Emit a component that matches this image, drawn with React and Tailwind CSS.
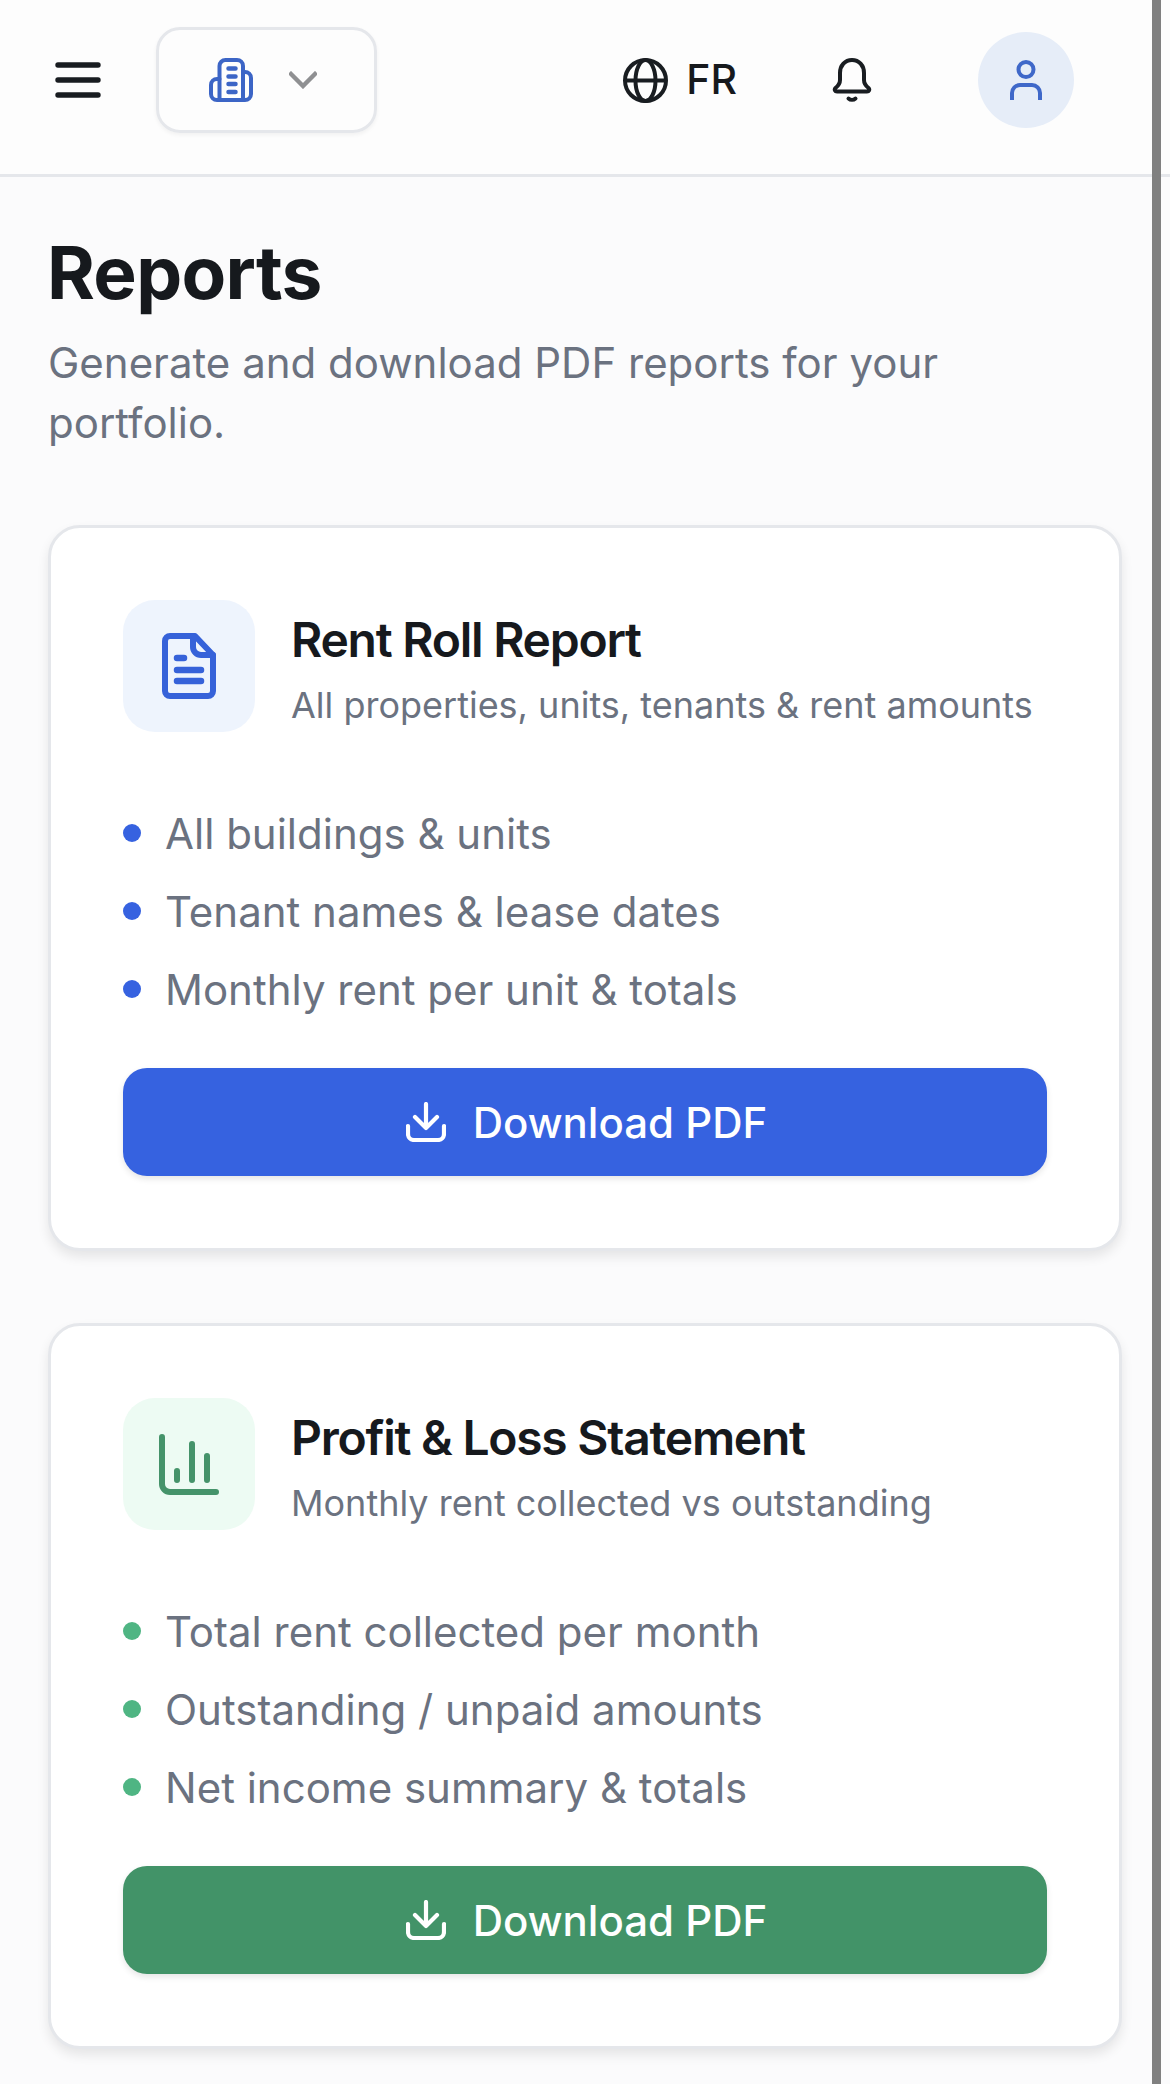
import React from "react";

function Building() {
  return (
    <svg width="44" height="44" viewBox="0 0 44 44" fill="none" stroke="#3c65c6" strokeWidth="4" strokeLinecap="round" strokeLinejoin="round">
      <path d="M10.5 41V8a6 6 0 0 1 6-6H28a6 6 0 0 1 6 6v33" />
      <path d="M10.5 21H8a6 6 0 0 0-6 6v9a6 6 0 0 0 6 6h28a6 6 0 0 0 6-6V20a6 6 0 0 0-6-6h-2" />
      <path d="M19.5 10.5h7M19.5 18.5h7M19.5 26h7M19.5 34h7" strokeWidth="4.5" />
    </svg>
  );
}
function Chevron() {
  return (
    <svg width="28" height="18" viewBox="0 0 28 18" fill="none" stroke="#8f9092" strokeWidth="4.4" strokeLinecap="square">
      <path d="M2 3l12 12L26 3" />
    </svg>
  );
}
function Burger() {
  return (
    <svg width="46" height="36" viewBox="0 0 46 36" fill="none" stroke="#181c20" strokeWidth="5.4" strokeLinecap="round">
      <path d="M3 3h40M3 18h40M3 33h40" />
    </svg>
  );
}
function Globe() {
  return (
    <svg width="45" height="45" viewBox="0 0 45 45" fill="none" stroke="#191d21" strokeWidth="4">
      <circle cx="22.5" cy="22.5" r="20.5" />
      <ellipse cx="22.5" cy="22.5" rx="10" ry="20.5" />
      <path d="M2 22.5h41" />
    </svg>
  );
}
function Bell() {
  return (
    <svg width="40" height="44" viewBox="0 0 40 44" fill="none" stroke="#191d21" strokeWidth="4" strokeLinecap="round" strokeLinejoin="round">
      <path d="M20 2c-7 0-12 5.5-12 13v7c0 4-2 6-4.5 8-1.500 1.500-.5 3.500 1.500 3.500h30c2 0 3-2 1.500-3.500-2.500-2-4.500-4-4.500-8v-7c0-7.500-5-13-12-13z" />
      <path d="M16.500 40.500c2 1.800 5 1.800 7 0" />
    </svg>
  );
}
function Person() {
  return (
    <svg width="32" height="40" viewBox="0 0 32 40" fill="none" stroke="#3f68c9" strokeWidth="4">
      <circle cx="16" cy="9.500" r="7.500" />
      <path d="M2 40v-7a8 8 0 0 1 8-8h12a8 8 0 0 1 8 8v7" />
    </svg>
  );
}
function FileIcon() {
  return (
    <svg width="54" height="66" viewBox="0 0 54 66" fill="none" stroke="#3662d9" strokeWidth="6" strokeLinecap="round" strokeLinejoin="round">
      <path d="M8 3h25l18 19v36a5 5 0 0 1-5 5H8a5 5 0 0 1-5-5V8a5 5 0 0 1 5-5z" />
      <path d="M31 3v11a8 8 0 0 0 8 8h12" />
      <path d="M15 25h7M15 37h24M15 48h24" strokeWidth="6.500" />
    </svg>
  );
}
function ChartIcon() {
  return (
    <svg width="60" height="61" viewBox="0 0 60 61" fill="none" stroke="#45936a" strokeWidth="6" strokeLinecap="round">
      <path d="M3 3v47a8 8 0 0 0 8 8h46" />
      <path d="M18 37v9M33 10v36M48 22v24" />
    </svg>
  );
}
function DownloadIcon() {
  return (
    <svg width="40" height="40" viewBox="0 0 40 40" fill="none" stroke="#ffffff" strokeWidth="4.200" strokeLinecap="round" strokeLinejoin="round">
      <path d="M20 2v24M9 15l11 11 11-11" />
      <path d="M2 24v8a6 6 0 0 0 6 6h24a6 6 0 0 0 6-6v-8" />
    </svg>
  );
}

function Card({ icon, iconBg, title, sub, items, dot, btn, className }) {
  return (
    <section className={`w-[1074px] rounded-[32px] border-[3px] border-[#e5e7eb] bg-white p-[72px] shadow-[0_6px_12px_rgba(0,0,0,0.09)] ${className}`}>
      <div className="flex items-center gap-[36px]">
        <div className={`flex h-[132px] w-[132px] shrink-0 items-center justify-center rounded-[32px] ${iconBg}`}>{icon}</div>
        <div className="flex flex-col pt-[7px]">
          <h2 className="text-[48px] leading-[60px] font-semibold tracking-[-1.25px] text-[#16191d]">{title}</h2>
          <p className="mt-[10px] text-[36px] leading-[50px] text-[#6b7280]">{sub}</p>
        </div>
      </div>
      <ul className="mt-[62px] flex flex-col">
        {items.map((t) => (
          <li key={t} className="flex h-[78px] items-center gap-[24px] text-[42px] text-[#6b7280]">
            <span className={`h-[18px] w-[18px] shrink-0 rounded-full ${dot}`} />
            {t}
          </li>
        ))}
      </ul>
      <button className={`mt-[40px] flex h-[108px] w-full items-center justify-center gap-[27px] rounded-[24px] pl-[3px] text-[42px] font-medium text-white shadow-[0_3px_6px_rgba(0,0,0,0.1)] ${btn}`}>
        <DownloadIcon />
        Download PDF
      </button>
    </section>
  );
}

export default function App() {
  return (
    <div className="relative h-[2084px] w-[1170px] overflow-hidden bg-[#fbfbfc] [font-family:Inter,sans-serif]">
      <header className="flex h-[177px] items-center border-b-[3px] border-[#e5e7eb] bg-[#fdfdfd] pb-[14px] pl-[55px] pr-[96px]">
        <Burger />
        <div className="ml-[55px] flex h-[106px] w-[221px] items-center justify-center gap-[36px] rounded-[24px] border-[3px] border-[#e5e7eb] pr-[7px] shadow-[0_2px_4px_rgba(0,0,0,0.05)]">
          <Building />
          <Chevron />
        </div>
        <div className="ml-auto flex items-center">
          <Globe />
          <span className="ml-[18px] text-[41px] font-medium text-[#16191d]">FR</span>
          <span className="ml-[95px] flex"><Bell /></span>
          <div className="ml-[106px] flex h-[96px] w-[96px] items-center justify-center rounded-full bg-[#e6edf8]"><Person /></div>
        </div>
      </header>
      <main className="pl-[48px] pt-[54px]">
        <h1 className="-ml-px text-[73px] leading-[84px] font-bold tracking-[-0.7px] text-[#16191d]">Reports</h1>
        <p className="mt-[18px] w-[1000px] text-[42px] leading-[60px] text-[#6b7280]">Generate and download PDF reports for your portfolio.</p>
        <Card
          className="mt-[72px]"
          icon={<FileIcon />}
          iconBg="bg-[#eef4fd]"
          title="Rent Roll Report"
          sub="All properties, units, tenants & rent amounts"
          items={["All buildings & units", "Tenant names & lease dates", "Monthly rent per unit & totals"]}
          dot="bg-[#3662e0]"
          btn="bg-[#3662e0]"
        />
        <Card
          className="mt-[72px]"
          icon={<ChartIcon />}
          iconBg="bg-[#edfbf3]"
          title="Profit & Loss Statement"
          sub="Monthly rent collected vs outstanding"
          items={["Total rent collected per month", "Outstanding / unpaid amounts", "Net income summary & totals"]}
          dot="bg-[#4fb583]"
          btn="bg-[#429368]"
        />
      </main>
      <div className="absolute right-[9px] top-0 h-full w-[9px] bg-[#808080]" />
    </div>
  );
}
